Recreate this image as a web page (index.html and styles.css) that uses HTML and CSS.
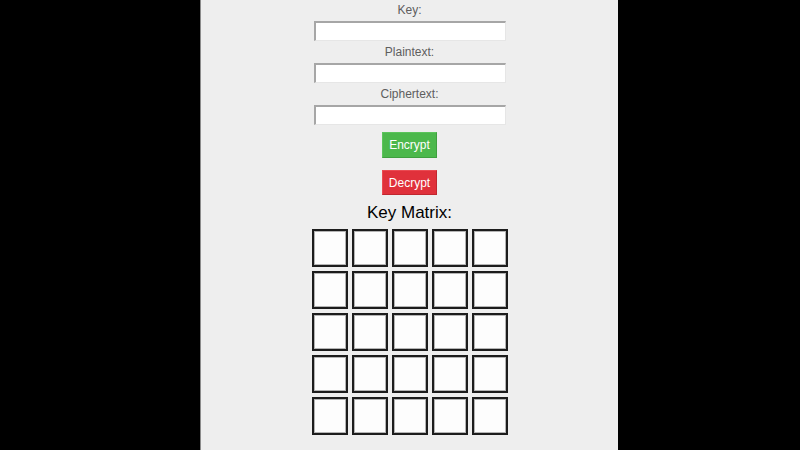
FILE: index.html
```html
<!DOCTYPE html>
<html>
<head>
<meta charset="utf-8">
<link rel="stylesheet" href="styles.css">
</head>
<body>
<div class="panel">
  <label class="label">Key:</label>
  <input class="field" type="text">
  <label class="label">Plaintext:</label>
  <input class="field" type="text">
  <label class="label">Ciphertext:</label>
  <input class="field" type="text">
  <button class="btn encrypt">Encrypt</button>
  <button class="btn decrypt">Decrypt</button>
  <h2 class="title">Key Matrix:</h2>
  <div class="matrix">
    <input class="cell"><input class="cell"><input class="cell"><input class="cell"><input class="cell">
    <input class="cell"><input class="cell"><input class="cell"><input class="cell"><input class="cell">
    <input class="cell"><input class="cell"><input class="cell"><input class="cell"><input class="cell">
    <input class="cell"><input class="cell"><input class="cell"><input class="cell"><input class="cell">
    <input class="cell"><input class="cell"><input class="cell"><input class="cell"><input class="cell">
  </div>
</div>
</body>
</html>
```
FILE: styles.css
```css
html, body {
  margin: 0;
  padding: 0;
  background: #000;
  height: 450px;
  overflow: hidden;
}
body {
  display: flex;
  font-family: "Liberation Sans", Arial, sans-serif;
}
.panel {
  margin-left: 200px;
  width: 417px;
  height: 450px;
  background: #eeeeee;
  border-left: 1px solid #8c8c8c;
  display: flex;
  flex-direction: column;
  align-items: center;
}
.label {
  display: block;
  font-size: 12px;
  line-height: 21px;
  height: 21px;
  color: #5e5e5e;
}
.field {
  box-sizing: border-box;
  width: 192px;
  height: 20px;
  margin: 0 0 1px 0;
  padding: 0;
  background: #fff;
  border-style: solid;
  border-width: 2px 1px 1px 2px;
  border-color: #a6a6a6 #e6e6e6 #e6e6e6 #a6a6a6;
  outline: none;
}
.btn {
  box-sizing: border-box;
  height: 26px;
  padding: 0 6px;
  font-family: "Liberation Sans", Arial, sans-serif;
  font-size: 12px;
  color: #fff;
  border: 1px solid;
  cursor: pointer;
}
.encrypt {
  margin-top: 6px;
  background: #4cb84c;
  border-color: #5cc45c #3f9f3f #3f9f3f #5cc45c;
}
.decrypt {
  margin-top: 12px;
  height: 25px;
  background: #e0313b;
  border-color: #ea4a52 #c0272f #c0272f #ea4a52;
}
.title {
  margin: 8px 0 0 0;
  font-size: 17px;
  line-height: 20px;
  font-weight: normal;
  color: #000;
}
.matrix {
  margin-top: 6px;
  display: grid;
  grid-template-columns: repeat(5, 36px);
  grid-auto-rows: 38px;
  column-gap: 4px;
  row-gap: 4px;
  margin-left: 1px;
}
.cell {
  box-sizing: border-box;
  width: 36px;
  height: 38px;
  margin: 0;
  padding: 0;
  background: #fdfdfd;
  border: 2px solid #1c1c1c;
  box-shadow: inset 0 0 0 1px #b4b4b4;
  outline: none;
}
```
